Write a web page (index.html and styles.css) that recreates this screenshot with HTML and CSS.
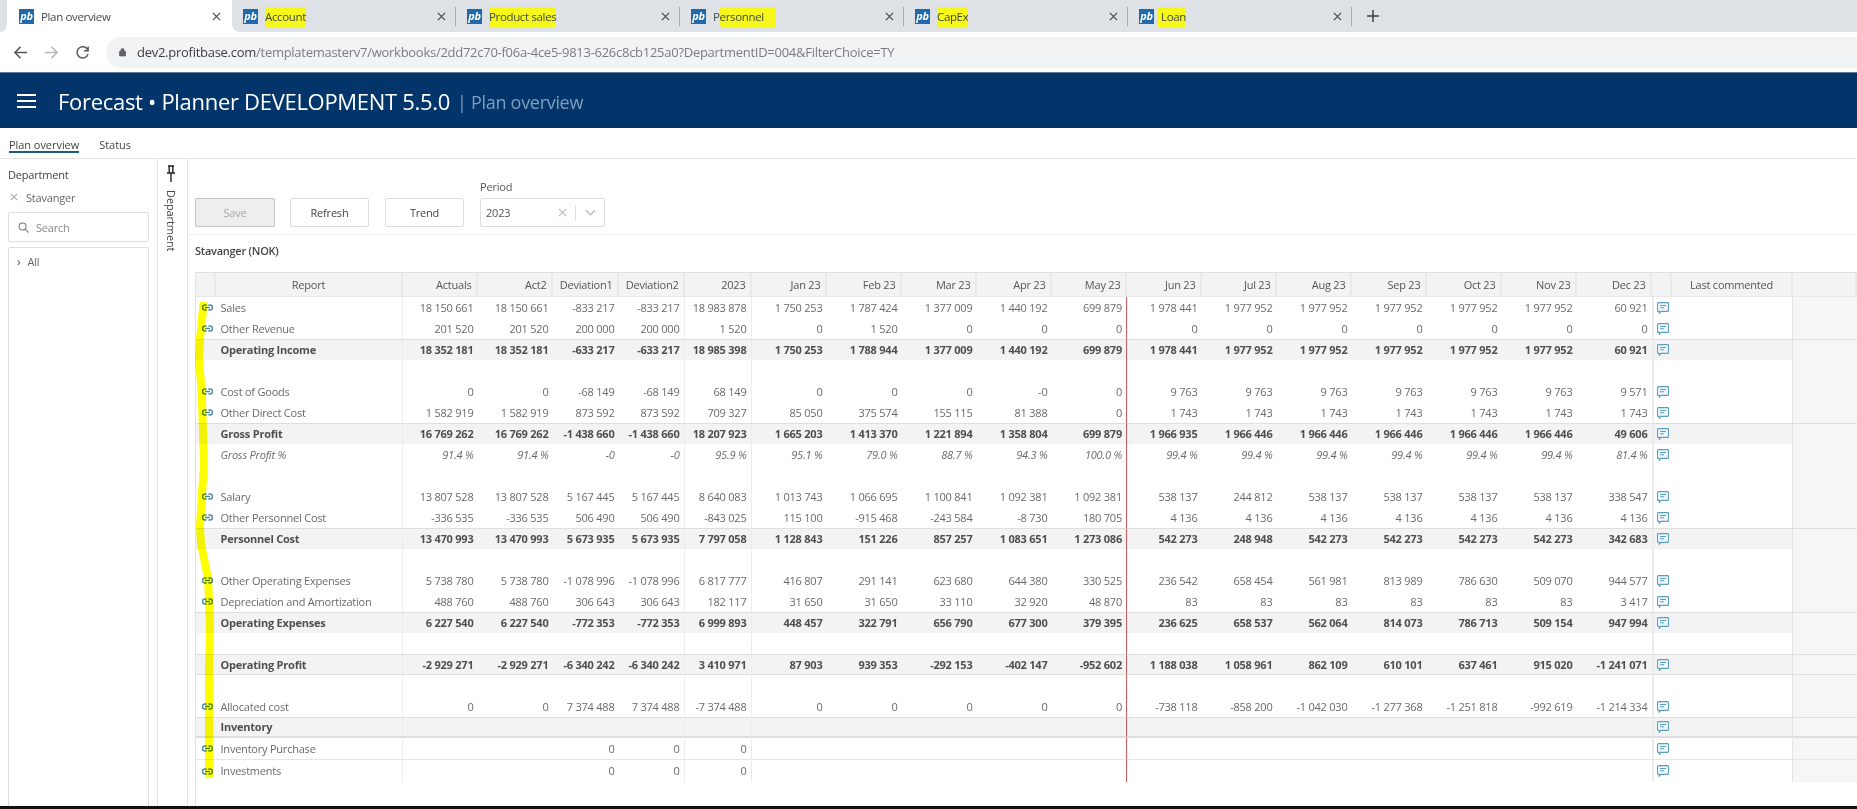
FILE: index.html
```html
<!DOCTYPE html>
<html lang="en">
<head>
<meta charset="utf-8">
<title>Plan overview</title>
<link rel="stylesheet" href="styles.css">
</head>
<body>
<svg class="defs" width="0" height="0" aria-hidden="true">
  <symbol id="lk" viewBox="0 0 11 7"><path d="M4.6 1H3a2.500 2.500 0 0 0 0 5h1.600M6.400 1H8a2.500 2.500 0 0 1 0 5H6.400M3 3.500h5" fill="none" stroke="currentColor" stroke-width="1.400"/></symbol>
  <symbol id="cm" viewBox="0 0 12 12"><path d="M1.500 .6h9a1 1 0 0 1 1 1v6.800a1 1 0 0 1-1 1H4L2.300 11.300V9.400H1.500a1 1 0 0 1-1-1V1.600a1 1 0 0 1 1-1z" fill="#eef6fa" stroke="currentColor" stroke-width="1.100"/><path d="M3 3.500h6M3 5.800h4" stroke="currentColor" stroke-width="1.100"/></symbol>
  <symbol id="cl" viewBox="0 0 10 10"><path d="M1 1l8 8M9 1L1 9" fill="none" stroke="currentColor" stroke-width="1.400"/></symbol>
</svg>

<div class="tabstrip">
  <div class="tab-lead"></div>
  <div class="tab tab-active"><span class="fav">pb</span><span class="tab-title">Plan overview</span><svg class="tab-x"><use href="#cl"/></svg></div>
  <div class="tab tab-after"><span class="fav">pb</span><span class="tab-title"><mark class="hl">Account</mark></span><svg class="tab-x"><use href="#cl"/></svg><i class="tab-sep"></i></div>
  <div class="tab"><span class="fav">pb</span><span class="tab-title"><mark class="hl">Product sales</mark></span><svg class="tab-x"><use href="#cl"/></svg><i class="tab-sep"></i></div>
  <div class="tab"><span class="fav">pb</span><span class="tab-title">P<mark class="hl hl-wide">ersonnel</mark></span><svg class="tab-x"><use href="#cl"/></svg><i class="tab-sep"></i></div>
  <div class="tab"><span class="fav">pb</span><span class="tab-title"><mark class="hl">CapEx</mark></span><svg class="tab-x"><use href="#cl"/></svg><i class="tab-sep"></i></div>
  <div class="tab"><span class="fav">pb</span><span class="tab-title"><mark class="hl hl-left">Loan</mark></span><svg class="tab-x"><use href="#cl"/></svg><i class="tab-sep"></i></div>
  <div class="tab-rest"><svg class="tab-plus" viewBox="0 0 12 12"><path d="M6 0v12M0 6h12" stroke="#3c4043" stroke-width="1.500"/></svg></div>
</div>

<div class="addressbar">
  <svg class="nav nav-on" viewBox="0 0 16 16"><path d="M15 8H2M8 2L2 8l6 6" fill="none" stroke="currentColor" stroke-width="1.600"/></svg>
  <svg class="nav nav-off" viewBox="0 0 16 16"><path d="M1 8h13M8 2l6 6-6 6" fill="none" stroke="currentColor" stroke-width="1.600"/></svg>
  <svg class="nav nav-on" viewBox="0 0 16 16"><path d="M13.500 5A6 6 0 1 0 14 9.500M14 1.500V6H9.500" fill="none" stroke="currentColor" stroke-width="1.600"/></svg>
  <div class="omnibox">
    <svg class="lock" viewBox="0 0 10 12"><path d="M1 5h8a.6.6 0 0 1 .6.6v5.500a.6.6 0 0 1-.6.6H1a.6.6 0 0 1-.6-.6V5.600A.6.6 0 0 1 1 5zM2.700 5V3.200a2.300 2.300 0 0 1 4.600 0V5" fill="#5f6368" stroke="#5f6368"/></svg>
    <span class="url"><b class="host">dev2.profitbase.com</b>/templatemasterv7/workbooks/2dd72c70-f06a-4ce5-9813-626c8cb125a0?DepartmentID=004&amp;FilterChoice=TY</span>
  </div>
</div>

<header class="appbar">
  <svg class="burger" viewBox="0 0 19 14"><path d="M0 1h19M0 7h19M0 13h19" stroke="#fff" stroke-width="1.800"/></svg>
  <span class="app-title">Forecast • Planner DEVELOPMENT 5.5.0</span>
  <span class="app-sub"><span class="app-bar">|</span> Plan overview</span>
</header>

<nav class="subnav">
  <span class="subtab subtab-on">Plan overview</span>
  <span class="subtab">Status</span>
</nav>

<main class="workspace">
  <aside class="filter">
    <div class="filter-title">Department</div>
    <div class="filter-chip"><svg class="chip-x"><use href="#cl"/></svg>Stavanger</div>
    <div class="searchbox"><svg class="mag" viewBox="0 0 12 12"><circle cx="5" cy="5" r="3.800" fill="none" stroke="#777" stroke-width="1.100"/><path d="M7.800 7.800L11.500 11.500" stroke="#777" stroke-width="1.100"/></svg>Search</div>
    <div class="treebox"><span class="tree-ch">›</span>All</div>
  </aside>
  <div class="pinstrip">
    <svg class="pin" viewBox="0 0 10 18"><path d="M2 1h6M3.200 1v6.500M6.800 1v6.500M1 8h8M5 8v9" fill="none" stroke="#222" stroke-width="1.400"/></svg>
    <span class="pin-label">Department</span>
  </div>
  <section class="content">
    <div class="toolbar">
      <button class="btn btn-off">Save</button>
      <button class="btn">Refresh</button>
      <button class="btn">Trend</button>
      <div class="field">
        <label class="field-label">Period</label>
        <div class="select"><span class="select-val">2023</span><svg class="sel-x"><use href="#cl"/></svg><i class="sel-sep"></i><svg class="sel-ch" viewBox="0 0 12 7"><path d="M1 1l5 5 5-5" fill="none" stroke="#bbb" stroke-width="1.300"/></svg></div>
      </div>
    </div>
    <div class="report-title">Stavanger (NOK)</div>
    <div class="report">
      <svg class="marker" viewBox="0 0 30 500" width="30" height="500" aria-hidden="true"><path d="M8.700 10L5 47 4 68 6.700 99 8 140 9 174 7 201 5 235 6 252 13 286 15 331 14 378 14 447 14 486" fill="none" stroke="#ffff00" stroke-width="8" stroke-linejoin="round"/></svg>
      <table class="grid">
        <colgroup><col class="c-sel"><col class="c-rep"><col class="c-a"><col class="c-a"><col class="c-d"><col class="c-d"><col class="c-y"><col class="c-m"><col class="c-m"><col class="c-m"><col class="c-m"><col class="c-m"><col class="c-m"><col class="c-m"><col class="c-m"><col class="c-m"><col class="c-m"><col class="c-m"><col class="c-m"><col class="c-c"><col class="c-l"><col></colgroup>
        <thead><tr><th></th><th>Report</th><th>Actuals</th><th>Act2</th><th>Deviation1</th><th>Deviation2</th><th>2023</th><th>Jan 23</th><th>Feb 23</th><th>Mar 23</th><th>Apr 23</th><th>May 23</th><th>Jun 23</th><th>Jul 23</th><th>Aug 23</th><th>Sep 23</th><th>Oct 23</th><th>Nov 23</th><th>Dec 23</th><th></th><th>Last commented</th><th></th></tr></thead>
        <tbody>
          <tr><td><svg class="lk"><use href="#lk"/></svg></td><td>Sales</td><td>18 150 661</td><td>18 150 661</td><td>-833 217</td><td>-833 217</td><td>18 983 878</td><td>1 750 253</td><td>1 787 424</td><td>1 377 009</td><td>1 440 192</td><td>699 879</td><td>1 978 441</td><td>1 977 952</td><td>1 977 952</td><td>1 977 952</td><td>1 977 952</td><td>1 977 952</td><td>60 921</td><td><svg class="cm"><use href="#cm"/></svg></td><td></td><td></td></tr>
          <tr><td><svg class="lk"><use href="#lk"/></svg></td><td>Other Revenue</td><td>201 520</td><td>201 520</td><td>200 000</td><td>200 000</td><td>1 520</td><td>0</td><td>1 520</td><td>0</td><td>0</td><td>0</td><td>0</td><td>0</td><td>0</td><td>0</td><td>0</td><td>0</td><td>0</td><td><svg class="cm"><use href="#cm"/></svg></td><td></td><td></td></tr>
          <tr class="band"><td></td><td>Operating Income</td><td>18 352 181</td><td>18 352 181</td><td>-633 217</td><td>-633 217</td><td>18 985 398</td><td>1 750 253</td><td>1 788 944</td><td>1 377 009</td><td>1 440 192</td><td>699 879</td><td>1 978 441</td><td>1 977 952</td><td>1 977 952</td><td>1 977 952</td><td>1 977 952</td><td>1 977 952</td><td>60 921</td><td><svg class="cm"><use href="#cm"/></svg></td><td></td><td></td></tr>
          <tr><td></td><td></td><td></td><td></td><td></td><td></td><td></td><td></td><td></td><td></td><td></td><td></td><td></td><td></td><td></td><td></td><td></td><td></td><td></td><td></td><td></td><td></td></tr>
          <tr><td><svg class="lk"><use href="#lk"/></svg></td><td>Cost of Goods</td><td>0</td><td>0</td><td>-68 149</td><td>-68 149</td><td>68 149</td><td>0</td><td>0</td><td>0</td><td>-0</td><td>0</td><td>9 763</td><td>9 763</td><td>9 763</td><td>9 763</td><td>9 763</td><td>9 763</td><td>9 571</td><td><svg class="cm"><use href="#cm"/></svg></td><td></td><td></td></tr>
          <tr><td><svg class="lk"><use href="#lk"/></svg></td><td>Other Direct Cost</td><td>1 582 919</td><td>1 582 919</td><td>873 592</td><td>873 592</td><td>709 327</td><td>85 050</td><td>375 574</td><td>155 115</td><td>81 388</td><td>0</td><td>1 743</td><td>1 743</td><td>1 743</td><td>1 743</td><td>1 743</td><td>1 743</td><td>1 743</td><td><svg class="cm"><use href="#cm"/></svg></td><td></td><td></td></tr>
          <tr class="band"><td></td><td>Gross Profit</td><td>16 769 262</td><td>16 769 262</td><td>-1 438 660</td><td>-1 438 660</td><td>18 207 923</td><td>1 665 203</td><td>1 413 370</td><td>1 221 894</td><td>1 358 804</td><td>699 879</td><td>1 966 935</td><td>1 966 446</td><td>1 966 446</td><td>1 966 446</td><td>1 966 446</td><td>1 966 446</td><td>49 606</td><td><svg class="cm"><use href="#cm"/></svg></td><td></td><td></td></tr>
          <tr class="ital"><td></td><td>Gross Profit %</td><td>91.4 %</td><td>91.4 %</td><td>-0</td><td>-0</td><td>95.9 %</td><td>95.1 %</td><td>79.0 %</td><td>88.7 %</td><td>94.3 %</td><td>100.0 %</td><td>99.4 %</td><td>99.4 %</td><td>99.4 %</td><td>99.4 %</td><td>99.4 %</td><td>99.4 %</td><td>81.4 %</td><td><svg class="cm"><use href="#cm"/></svg></td><td></td><td></td></tr>
          <tr><td></td><td></td><td></td><td></td><td></td><td></td><td></td><td></td><td></td><td></td><td></td><td></td><td></td><td></td><td></td><td></td><td></td><td></td><td></td><td></td><td></td><td></td></tr>
          <tr><td><svg class="lk"><use href="#lk"/></svg></td><td>Salary</td><td>13 807 528</td><td>13 807 528</td><td>5 167 445</td><td>5 167 445</td><td>8 640 083</td><td>1 013 743</td><td>1 066 695</td><td>1 100 841</td><td>1 092 381</td><td>1 092 381</td><td>538 137</td><td>244 812</td><td>538 137</td><td>538 137</td><td>538 137</td><td>538 137</td><td>338 547</td><td><svg class="cm"><use href="#cm"/></svg></td><td></td><td></td></tr>
          <tr><td><svg class="lk"><use href="#lk"/></svg></td><td>Other Personnel Cost</td><td>-336 535</td><td>-336 535</td><td>506 490</td><td>506 490</td><td>-843 025</td><td>115 100</td><td>-915 468</td><td>-243 584</td><td>-8 730</td><td>180 705</td><td>4 136</td><td>4 136</td><td>4 136</td><td>4 136</td><td>4 136</td><td>4 136</td><td>4 136</td><td><svg class="cm"><use href="#cm"/></svg></td><td></td><td></td></tr>
          <tr class="band"><td></td><td>Personnel Cost</td><td>13 470 993</td><td>13 470 993</td><td>5 673 935</td><td>5 673 935</td><td>7 797 058</td><td>1 128 843</td><td>151 226</td><td>857 257</td><td>1 083 651</td><td>1 273 086</td><td>542 273</td><td>248 948</td><td>542 273</td><td>542 273</td><td>542 273</td><td>542 273</td><td>342 683</td><td><svg class="cm"><use href="#cm"/></svg></td><td></td><td></td></tr>
          <tr><td></td><td></td><td></td><td></td><td></td><td></td><td></td><td></td><td></td><td></td><td></td><td></td><td></td><td></td><td></td><td></td><td></td><td></td><td></td><td></td><td></td><td></td></tr>
          <tr><td><svg class="lk"><use href="#lk"/></svg></td><td>Other Operating Expenses</td><td>5 738 780</td><td>5 738 780</td><td>-1 078 996</td><td>-1 078 996</td><td>6 817 777</td><td>416 807</td><td>291 141</td><td>623 680</td><td>644 380</td><td>330 525</td><td>236 542</td><td>658 454</td><td>561 981</td><td>813 989</td><td>786 630</td><td>509 070</td><td>944 577</td><td><svg class="cm"><use href="#cm"/></svg></td><td></td><td></td></tr>
          <tr><td><svg class="lk"><use href="#lk"/></svg></td><td>Depreciation and Amortization</td><td>488 760</td><td>488 760</td><td>306 643</td><td>306 643</td><td>182 117</td><td>31 650</td><td>31 650</td><td>33 110</td><td>32 920</td><td>48 870</td><td>83</td><td>83</td><td>83</td><td>83</td><td>83</td><td>83</td><td>3 417</td><td><svg class="cm"><use href="#cm"/></svg></td><td></td><td></td></tr>
          <tr class="band"><td></td><td>Operating Expenses</td><td>6 227 540</td><td>6 227 540</td><td>-772 353</td><td>-772 353</td><td>6 999 893</td><td>448 457</td><td>322 791</td><td>656 790</td><td>677 300</td><td>379 395</td><td>236 625</td><td>658 537</td><td>562 064</td><td>814 073</td><td>786 713</td><td>509 154</td><td>947 994</td><td><svg class="cm"><use href="#cm"/></svg></td><td></td><td></td></tr>
          <tr><td></td><td></td><td></td><td></td><td></td><td></td><td></td><td></td><td></td><td></td><td></td><td></td><td></td><td></td><td></td><td></td><td></td><td></td><td></td><td></td><td></td><td></td></tr>
          <tr class="band band-closed"><td></td><td>Operating Profit</td><td>-2 929 271</td><td>-2 929 271</td><td>-6 340 242</td><td>-6 340 242</td><td>3 410 971</td><td>87 903</td><td>939 353</td><td>-292 153</td><td>-402 147</td><td>-952 602</td><td>1 188 038</td><td>1 058 961</td><td>862 109</td><td>610 101</td><td>637 461</td><td>915 020</td><td>-1 241 071</td><td><svg class="cm"><use href="#cm"/></svg></td><td></td><td></td></tr>
          <tr><td></td><td></td><td></td><td></td><td></td><td></td><td></td><td></td><td></td><td></td><td></td><td></td><td></td><td></td><td></td><td></td><td></td><td></td><td></td><td></td><td></td><td></td></tr>
          <tr><td><svg class="lk"><use href="#lk"/></svg></td><td>Allocated cost</td><td>0</td><td>0</td><td>7 374 488</td><td>7 374 488</td><td>-7 374 488</td><td>0</td><td>0</td><td>0</td><td>0</td><td>0</td><td>-738 118</td><td>-858 200</td><td>-1 042 030</td><td>-1 277 368</td><td>-1 251 818</td><td>-992 619</td><td>-1 214 334</td><td><svg class="cm"><use href="#cm"/></svg></td><td></td><td></td></tr>
          <tr class="band band-plain band-thick"><td></td><td>Inventory</td><td></td><td></td><td></td><td></td><td></td><td></td><td></td><td></td><td></td><td></td><td></td><td></td><td></td><td></td><td></td><td></td><td></td><td><svg class="cm"><use href="#cm"/></svg></td><td></td><td></td></tr>
          <tr class="tall ruled"><td><svg class="lk"><use href="#lk"/></svg></td><td>Inventory Purchase</td><td></td><td></td><td>0</td><td>0</td><td>0</td><td></td><td></td><td></td><td></td><td></td><td></td><td></td><td></td><td></td><td></td><td></td><td></td><td><svg class="cm"><use href="#cm"/></svg></td><td></td><td></td></tr>
          <tr class="tall"><td><svg class="lk"><use href="#lk"/></svg></td><td>Investments</td><td></td><td></td><td>0</td><td>0</td><td>0</td><td></td><td></td><td></td><td></td><td></td><td></td><td></td><td></td><td></td><td></td><td></td><td></td><td><svg class="cm"><use href="#cm"/></svg></td><td></td><td></td></tr>
        </tbody>
      </table>
    </div>
  </section>
</main>
<div class="bottomline"></div>
</body>
</html>
```

FILE: styles.css
```css
* { box-sizing: border-box; }
html, body { margin: 0; height: 100%; }
body {
  width: 1857px; height: 809px; overflow: hidden;
  display: flex; flex-direction: column;
  font-family: "Open Sans", "Noto Sans", sans-serif;
  font-size: 11px; color: #555; background: #fff;
}
.defs { position: absolute; }

/* browser tabs */
.tabstrip { display: flex; height: 32px; flex: none; background: #fff; }
.tab-lead { width: 7px; background: #dee1e6; border-bottom-right-radius: 8px; }
.tab {
  width: 224px; display: flex; align-items: center; padding-left: 11px; position: relative;
  background: #dee1e6; color: #45494d; font-size: 11.5px; letter-spacing: -.35px;
}
.tab-active { width: 225px; padding-left: 12px; background: #fff; border-radius: 8px 8px 0 0; }
.tab-after { border-bottom-left-radius: 8px; }
.fav {
  width: 15px; height: 15px; flex: none; background: #1c69ab; color: #fff;
  font: italic 700 11px/14px "Open Sans", sans-serif; letter-spacing: -.2px; text-align: center;
}
.tab-title { flex: 1; margin-left: 7px; white-space: nowrap; }
.tab-x { width: 9px; height: 9px; flex: none; color: #4b4f53; margin-right: 10px; }
.tab-active .tab-x { margin-right: 11px; }
.tab-sep { position: absolute; right: 0; top: 7px; width: 1px; height: 19px; background: #a8acb0; }
.hl { background: #f6f71a; color: #44483a; padding: 2px 0 3px; border-radius: 2px; }
.hl-wide { padding-right: 12px; }
.hl-left { padding-left: 4px; margin-left: -4px; }
.tab-rest { flex: 1; background: #dee1e6; display: flex; align-items: center; padding-left: 15px; }
.tab-plus { width: 12px; height: 12px; }

/* address row */
.addressbar { height: 40px; flex: none; display: flex; align-items: center; padding-left: 13px; background: #fff; }
.nav { width: 15px; height: 15px; flex: none; margin-right: 16px; }
.nav-on { color: #55595d; }
.nav-off { color: #b4b7ba; }
.omnibox {
  flex: 1; height: 31px; padding-left: 13px; display: flex; align-items: center;
  background: #f1f3f4; border-radius: 16px 0 0 16px;
}
.lock { width: 7px; height: 10px; margin-right: 11px; flex: none; }
.url { font-size: 13px; color: #7a7d80; letter-spacing: -.27px; white-space: nowrap; }
.host { font-weight: 400; color: #3c4043; }

/* application bar */
.appbar { height: 56px; flex: none; display: flex; align-items: center; padding: 0 0 0 17px; background: #03356a; border-top: 1px solid #5d7a99; }
.burger { width: 19px; height: 14px; flex: none; margin-right: 22px; }
.app-title { color: #fff; font-size: 22px; letter-spacing: -.3px; white-space: nowrap; }
.app-sub { margin-left: 7px; color: #7f9dbe; font-size: 18px; letter-spacing: -.3px; white-space: nowrap; padding-top: 2px; }

/* page tabs */
.subnav { height: 31px; flex: none; display: flex; align-items: flex-start; gap: 20px; padding: 9px 0 0 9px; border-bottom: 1px solid #e4e4e4; }
.subtab { font-size: 11px; letter-spacing: -.05px; color: #444; height: 16px; line-height: 15px; }
.subtab-on { border-bottom: 2px solid #1d5d7c; }

/* workspace */
.workspace { flex: 1; min-height: 0; display: flex; }
.filter { width: 158px; flex: none; padding: 8px 8px 0 8px; display: flex; flex-direction: column; border-right: 1px solid #e2e2e2; }
.filter-title { font-size: 11px; letter-spacing: -.2px; color: #444; line-height: 16px; }
.filter-chip { display: flex; align-items: center; margin-top: 6px; height: 16px; color: #666; letter-spacing: -.2px; padding-left: 2px; }
.chip-x { width: 8px; height: 8px; margin-right: 8px; color: #aaa; }
.searchbox {
  margin-top: 7px; height: 30px; display: flex; align-items: center; padding-left: 9px;
  border: 1px solid #ddd; border-radius: 2px; color: #888; letter-spacing: -.2px;
}
.mag { width: 11px; height: 11px; margin-right: 7px; }
.treebox { margin-top: 5px; flex: 1; padding: 5px 0 0 8px; border: 1px solid #ddd; border-bottom: 0; border-radius: 2px 2px 0 0; color: #666; letter-spacing: -.2px; }
.tree-ch { margin-right: 7px; font-size: 12px; color: #555; }
.pinstrip { width: 30px; flex: none; display: flex; flex-direction: column; align-items: center; padding: 6px 3px 0 0; border-right: 1px solid #e2e2e2; }
.pin { width: 10px; height: 18px; flex: none; }
.pin-label { margin-top: 7px; writing-mode: vertical-rl; color: #444; font-size: 11px; letter-spacing: -.1px; }
.content { flex: 1; min-width: 0; display: flex; flex-direction: column; }

/* toolbar */
.toolbar { height: 76px; flex: none; display: flex; align-items: flex-start; padding: 39px 0 0 7px; border-bottom: 1px solid #f0f0f0; }
.btn {
  width: 79px; height: 29px; margin-right: 16px; background: #fff; border: 1px solid #dcdcdc; border-radius: 2px;
  font: 11px "Open Sans", sans-serif; letter-spacing: -.2px; color: #444; padding: 0;
}
.btn-off { width: 80px; margin-right: 15px; background: #eeeeee; border-color: #c4c4c4; color: #aaa; }
.field { position: relative; }
.field-label { position: absolute; left: 0; top: -19px; color: #555; font-size: 11px; letter-spacing: -.2px; }
.select { width: 125px; height: 29px; display: flex; align-items: center; padding-left: 5px; border: 1px solid #dcdcdc; border-radius: 2px; }
.select-val { flex: 1; color: #555; letter-spacing: -.2px; }
.sel-x { width: 9px; height: 9px; color: #bbb; }
.sel-sep { width: 1px; height: 16px; background: #ddd; margin: 0 9px 0 8px; }
.sel-ch { width: 11px; height: 7px; margin-right: 8px; }

.report-title { flex: none; height: 37px; padding: 7px 0 0 7px; font-weight: 600; color: #444; letter-spacing: -.25px; line-height: 17px; }

/* report grid */
.report { flex: 1; min-height: 0; margin-left: 7px; position: relative; border-left: 1px solid #e2e2e2; }
.marker { position: absolute; left: -1px; top: 20px; overflow: visible; mix-blend-mode: multiply; z-index: 2; pointer-events: none; }
.grid { width: 1661px; table-layout: fixed; border-collapse: separate; border-spacing: 0; letter-spacing: -.22px; }
.c-sel { width: 20px; }
.c-rep { width: 187px; }
.c-a { width: 75px; }
.c-d { width: 66px; }
.c-y { width: 67px; }
.c-m { width: 75px; }
.c-c { width: 20px; }
.c-l { width: 121px; }
.grid th {
  height: 25px; padding: 0 4.500px 0 0; text-align: right; font-weight: 400; color: #555; white-space: nowrap;
  background: #f3f3f3; border-top: 1px solid #dedede; border-bottom: 1px solid #e8e8e8; border-right: 2px solid #e9e9e9;
}
.grid th:nth-child(2), .grid th:nth-child(21) { text-align: center; padding: 0; font-size: 11px; }
.grid td {
  height: 21px; padding: 0 4.500px 0 0; text-align: right; white-space: nowrap; color: #6a6a6a; line-height: 14px;
}
.grid td:nth-child(1) { padding: 0; text-align: left; }
.grid td:nth-child(2) { padding: 0 0 0 4.500px; text-align: left; border-right: 1px solid #ececec; }
.grid td:nth-child(6), .grid td:nth-child(7) { border-right: 1px solid #ececec; }
.grid td:nth-child(12) { border-right: 1px solid #cf5a62; padding-right: 4px; }
.grid td:nth-child(20) { padding: 0; text-align: left; border-left: 2px solid #ececec; }
.grid td:nth-child(21) { border-right: 1px solid #e4e4e4; }
.grid td:nth-child(22) { background: #f6f6f6; }
.lk { width: 11px; height: 7px; margin-left: 6px; color: #4c86a8; display: block; }
.cm { width: 12px; height: 12px; margin-left: 3px; color: #5b9fbe; display: block; }
.band td { background: #f3f3f3; border-top: 1px solid #dedede; font-weight: 700; color: #4f4f4f; }
.band-closed td { border-bottom: 1px solid #dedede; }
.band-thick td { border-bottom: 2px solid #dedede; }
.ital td { font-style: italic; }
.tall td { height: 22px; }
.ruled td { border-bottom: 1px solid #e6e6e6; }

.bottomline { height: 3px; flex: none; background: #111; }
```
